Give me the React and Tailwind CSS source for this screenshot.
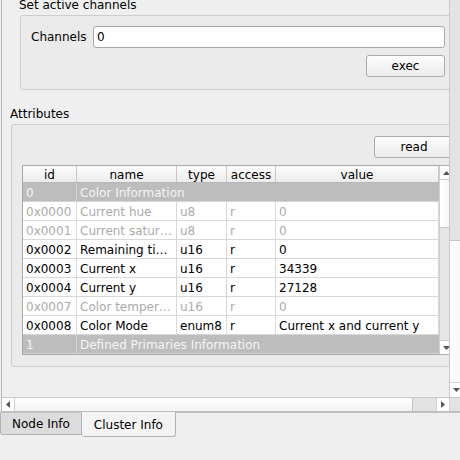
import React from "react";

const cols = [
  { key: "id", label: "id", w: "w-[54px]" },
  { key: "name", label: "name", w: "w-[100px]" },
  { key: "type", label: "type", w: "w-[50px]" },
  { key: "access", label: "access", w: "w-[49px]" },
  { key: "value", label: "value", w: "w-[163px]" },
];

const rows = [
  { section: true, id: "0", name: "Color Information" },
  { id: "0x0000", name: "Current hue", type: "u8", access: "r", value: "0", off: true },
  { id: "0x0001", name: "Current satur…", type: "u8", access: "r", value: "0", off: true },
  { id: "0x0002", name: "Remaining ti…", type: "u16", access: "r", value: "0" },
  { id: "0x0003", name: "Current x", type: "u16", access: "r", value: "34339" },
  { id: "0x0004", name: "Current y", type: "u16", access: "r", value: "27128" },
  { id: "0x0007", name: "Color temper…", type: "u16", access: "r", value: "0", off: true },
  { id: "0x0008", name: "Color Mode", type: "enum8", access: "r", value: "Current x and current y" },
  { section: true, id: "1", name: "Defined Primaries Information" },
];

function Arrow({ dir }) {
  const pts = {
    up: "0,4 7,4 3.5,0",
    down: "0,0 7,0 3.5,4",
    left: "4,0 4,7 0,3.5",
    right: "0,0 0,7 4,3.5",
  }[dir];
  const vertical = dir === "up" || dir === "down";
  return (
    <svg width={vertical ? 7 : 4} height={vertical ? 4 : 7} viewBox={vertical ? "0 0 7 4" : "0 0 4 7"}>
      <polygon points={pts} fill="#555" />
    </svg>
  );
}

function Button({ children, className }) {
  return (
    <div
      className={`h-[22px] flex items-center justify-center rounded-[3px] border border-[#ababab] bg-gradient-to-b from-[#fdfdfd] to-[#ececec] ${className}`}
    >
      {children}
    </div>
  );
}

function AttributeTable() {
  return (
    <div className="w-[432px] h-[190px] border border-[#a9a9a9] bg-white flex">
      <div className="w-[416px] flex flex-col">
        <div className="flex h-[17px] border-b border-[#b8b8b8]">
          {cols.map((c) => (
            <div
              key={c.key}
              className={`${c.w} shrink-0 border-r border-[#c8c8c8] bg-gradient-to-b from-[#fcfcfc] to-[#ececec] text-center pt-[2px] leading-[14px]`}
            >
              {c.label}
            </div>
          ))}
        </div>
        {rows.map((r) =>
          r.section ? (
            <div key={r.id} className="flex h-[19px] border-b border-[#d4d4d4] bg-[#bdbdbd] text-[#f5f5f5]">
              <div className="w-[54px] shrink-0 border-r border-[#d0d0d0] pl-[3px] pt-[2px] leading-[16px]">{r.id}</div>
              <div className="flex-1 pl-[3px] pt-[2px] leading-[16px] whitespace-nowrap">{r.name}</div>
            </div>
          ) : (
            <div
              key={r.id}
              className={`flex h-[19px] border-b border-[#d8d8d8] ${r.off ? "text-[#ababab]" : "text-black"}`}
            >
              {cols.map((c) => (
                <div
                  key={c.key}
                  className={`${c.w} shrink-0 border-r border-[#d8d8d8] pl-[3px] pt-[2px] leading-[16px] whitespace-nowrap overflow-hidden`}
                >
                  {r[c.key]}
                </div>
              ))}
            </div>
          )
        )}
      </div>
      {/* table scrollbar */}
      <div className="w-[14px] flex flex-col bg-[#e6e6e6] border-l border-[#cfcfcf]">
        <div className="h-[14px] flex items-center justify-center bg-white border-b border-[#d0d0d0]">
          <Arrow dir="up" />
        </div>
        <div className="h-[48px] bg-gradient-to-r from-white to-[#f4f4f4] border-b border-[#c8c8c8]" />
        <div className="flex-1" />
        <div className="h-[14px] flex items-center justify-center bg-white border-t border-[#d0d0d0]">
          <Arrow dir="down" />
        </div>
      </div>
    </div>
  );
}

export default function App() {
  return (
    <div className="w-[460px] h-[460px] overflow-hidden bg-[#efefef] font-['DejaVu_Sans',sans-serif] text-[12px] text-black">
      {/* scroll area */}
      <div className="ml-[1px] w-[463px] h-[412px] border-l border-b border-[#bdbdbd] flex flex-col">
        <div className="flex h-[397px]">
          <div className="w-[447px] overflow-hidden">
            <div className="w-[470px] -mt-[2px]">
              <div className="ml-[17px] h-[15px] leading-[15px]">Set active channels</div>
              <div className="mt-[2px] ml-[18px] w-[436px] h-[75px] rounded-[3px] border border-[#cdcdcd] bg-[#ebebeb] pt-[10px] pl-[10px] pr-[10px]">
                <div className="flex items-center h-[22px]">
                  <span className="w-[62px] shrink-0">Channels</span>
                  <div className="flex-1 h-[22px] rounded-[3px] border border-[#a8a8a8] bg-white pl-[3px] leading-[20px]">
                    0
                  </div>
                </div>
                <div className="mt-[7px] flex justify-end">
                  <Button className="w-[79px]">exec</Button>
                </div>
              </div>
              <div className="mt-[16px] ml-[8px] h-[15px] pt-px leading-[15px]">Attributes</div>
              <div className="mt-[3px] ml-[9px] w-[454px] h-[243px] rounded-[3px] border border-[#cdcdcd] bg-[#ebebeb] pt-[11px] pl-[10px]">
                <div className="w-[432px] flex justify-end">
                  <Button className="w-[80px]">read</Button>
                </div>
                <div className="mt-[7px]">
                  <AttributeTable />
                </div>
              </div>
            </div>
          </div>
          {/* vertical scrollbar */}
          <div className="w-[14px] flex flex-col border-l border-[#c9c9c9] bg-[#e3e3e3]">
            <div className="h-[240px]" />
            <div className="flex-1 bg-gradient-to-r from-white to-[#f6f6f6] border-t border-[#c4c4c4]" />
            <div className="h-[15px] flex items-center justify-center bg-white border-t border-[#d0d0d0]">
              <Arrow dir="down" />
            </div>
          </div>
        </div>
        {/* horizontal scrollbar */}
        <div className="flex h-[14px] border-t border-[#c9c9c9] bg-[#e3e3e3]">
          <div className="w-[13px] flex items-center justify-center bg-white border-r border-[#d0d0d0]">
            <Arrow dir="left" />
          </div>
          <div className="w-[398px] bg-gradient-to-b from-white to-[#f3f3f3] border-r border-[#c4c4c4]" />
          <div className="w-[23px]" />
          <div className="w-[14px] flex items-center justify-center bg-white border-l border-r border-[#d0d0d0]">
            <Arrow dir="right" />
          </div>
          <div className="flex-1" />
        </div>
      </div>
      {/* tab bar */}
      <div className="border-t border-[#c2c2c2] flex items-start">
        <div className="h-[22px] px-[11px] bg-[#dcdcdc] border-l border-r border-b border-[#b3b3b3] rounded-bl-[3px] pt-[2px] leading-[19px]">
          Node Info
        </div>
        <div className="-mt-px h-[25px] px-[12px] bg-[#f4f4f4] border-r border-b border-[#b3b3b3] rounded-b-[3px] pt-[3px] leading-[21px]">
          Cluster Info
        </div>
      </div>
    </div>
  );
}
